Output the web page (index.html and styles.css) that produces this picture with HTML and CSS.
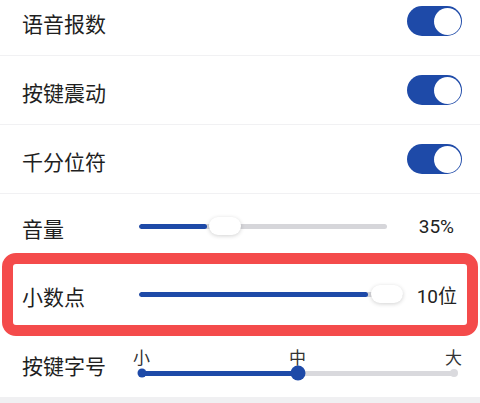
FILE: index.html
```html
<!DOCTYPE html>
<html lang="zh-CN">
<head>
<meta charset="utf-8">
<link rel="stylesheet" href="styles.css">
</head>
<body>
<div class="list">
  <div class="row">
    <span class="label">语音报数</span>
    <span class="toggle"><span class="knob"></span></span>
  </div>
  <div class="row">
    <span class="label">按键震动</span>
    <span class="toggle"><span class="knob"></span></span>
  </div>
  <div class="row">
    <span class="label">千分位符</span>
    <span class="toggle"><span class="knob"></span></span>
  </div>
  <div class="srow vol">
    <span class="label slabel">音量</span>
    <div class="slider slider-vol">
      <div class="track"><div class="fill" style="width:68px"></div></div>
      <div class="thumb" style="left:70px"></div>
    </div>
    <span class="value value-vol">35%</span>
  </div>
  <div class="srow dec">
    <span class="label slabel">小数点</span>
    <div class="slider slider-dec">
      <div class="track"><div class="fill" style="width:229px"></div></div>
      <div class="thumb" style="left:232px"></div>
    </div>
    <span class="value value-dec">10位</span>
    <div class="highlight"></div>
  </div>
  <div class="srow size">
    <span class="label">按键字号</span>
    <div class="size-slider">
      <div class="ticks"><span>小</span><span>中</span><span>大</span></div>
      <div class="steps">
        <div class="line"><div class="line-fill" style="width:50%"></div></div>
        <span class="dot dot-start"></span>
        <span class="dot dot-mid" style="left:50%"></span>
        <span class="dot dot-end"></span>
      </div>
    </div>
  </div>
</div>
<div class="footer"></div>
</body>
</html>
```

FILE: styles.css
```css
html, body {
  margin: 0;
  padding: 0;
  background: #ffffff;
  overflow: hidden;
}

body {
  width: 480px;
  height: 403px;
  font-family: "Noto Sans CJK SC", "Noto Sans", sans-serif;
  color: #1f1f1f;
}

.list {
  margin-top: -13px;
}

.row {
  box-sizing: border-box;
  height: 69px;
  border-bottom: 1px solid #f1f1f3;
  display: flex;
  align-items: center;
  justify-content: space-between;
  padding: 0 18px 0 22px;
}

.label {
  font-size: 21px;
  line-height: 28px;
  padding-top: 3px;
  color: #1f1f1f;
}

.toggle {
  box-sizing: border-box;
  width: 55px;
  height: 30px;
  border-radius: 15px;
  background: #1e4aa8;
  display: flex;
  align-items: center;
  justify-content: flex-end;
  padding: 0 1.5px;
}

.knob {
  width: 27px;
  height: 27px;
  border-radius: 50%;
  background: #ffffff;
}

.srow {
  box-sizing: border-box;
  display: flex;
  align-items: center;
  padding-left: 22px;
  position: relative;
}

.vol { height: 64px; }
.dec { height: 72px; }
.size { height: 67px; padding-right: 18px; }

.slabel {
  width: 117px;
  flex-shrink: 0;
}

.slider {
  position: relative;
  height: 18px;
  display: flex;
  align-items: center;
}

.slider-vol { width: 248px; }
.slider-dec { width: 264px; }

.track {
  width: 100%;
  height: 5px;
  border-radius: 3px;
  background: #d6d6da;
  overflow: hidden;
}

.fill {
  height: 100%;
  background: #1e4aa8;
  border-radius: 3px;
}

.thumb {
  position: absolute;
  top: 0;
  width: 32px;
  height: 18px;
  border-radius: 9px;
  background: #ffffff;
  box-shadow: 0 1px 4px rgba(0, 0, 0, 0.18);
}

.value {
  margin-left: auto;
  font-family: Roboto, "Noto Sans CJK SC", sans-serif;
  font-size: 19px;
  color: #222222;
}

.value-vol { padding-right: 26px; }
.value-dec { padding-right: 23px; }

.highlight {
  position: absolute;
  top: -5px;
  bottom: -6px;
  left: 2px;
  right: 2px;
  border: 11px solid #f44b4b;
  border-radius: 14px;
  pointer-events: none;
}

.size-slider {
  width: 329px;
  margin-left: auto;
}

.ticks {
  display: flex;
  justify-content: space-between;
  height: 19px;
  font-size: 17px;
  line-height: 19px;
  color: #333333;
}

.steps {
  position: relative;
  height: 14px;
  margin: 0 8.5px;
  display: flex;
  align-items: center;
}

.line {
  width: 100%;
  height: 5px;
  border-radius: 3px;
  background: #d9d9dd;
}

.line-fill {
  height: 100%;
  background: #1e4aa8;
  border-radius: 3px;
}

.dot {
  position: absolute;
  top: 50%;
  border-radius: 50%;
  transform: translate(-50%, -50%);
}

.dot-start {
  left: 0;
  width: 9px;
  height: 9px;
  background: #1e4aa8;
}

.dot-mid {
  width: 15px;
  height: 15px;
  background: #1e4aa8;
}

.dot-end {
  left: 100%;
  width: 8px;
  height: 8px;
  background: #dadade;
}

.footer {
  height: 20px;
  background: #f0f0f2;
}
```
